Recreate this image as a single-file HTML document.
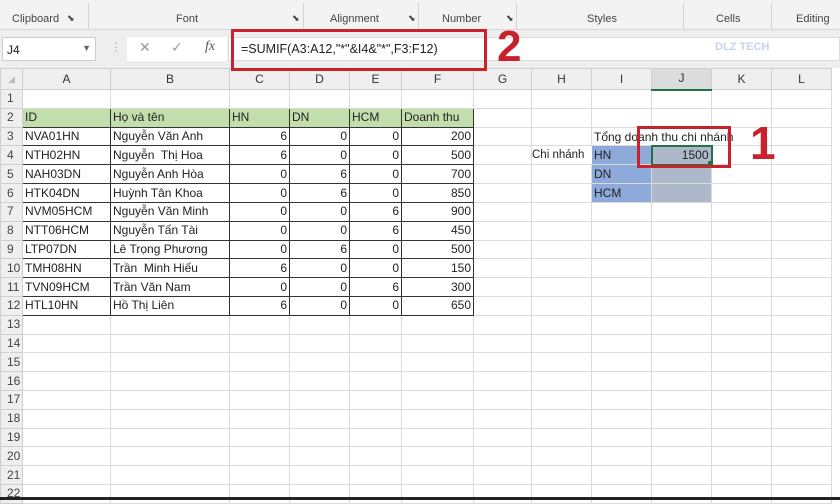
<!DOCTYPE html><html><head><meta charset="utf-8"><style>
*{margin:0;padding:0;box-sizing:border-box}
body{width:840px;height:500px;overflow:hidden;background:#fff;font-family:"Liberation Sans","DejaVu Sans",sans-serif;position:relative}
.rib{position:absolute;left:0;top:0;width:840px;height:30px;background:#f3f3f3;border-bottom:1px solid #d8d8d8}
.rib span{position:absolute;top:13px;font-size:11px;color:#444}
.rib i{position:absolute;top:3px;width:1px;height:26px;background:#d4d4d4}
.fb{position:absolute;left:0;top:30px;width:840px;height:38px;background:#eeeeee}
.nb{position:absolute;left:2px;top:37px;width:94px;height:24px;background:#fff;border:1px solid #ccc;font-size:12px;padding:5px 4px;color:#222}
.fx{position:absolute;left:127px;top:37px;width:100px;height:24px;background:#fff;font-size:14px;color:#999}
.fin{position:absolute;left:228px;top:37px;width:612px;height:24px;background:#fff;border:1px solid #ddd}
.ftxt{position:absolute;left:241px;top:42px;font-size:12.5px;color:#222}
.red{position:absolute;border:3px solid #c8232c}
.num{position:absolute;color:#c8232c;font-weight:bold;font-family:"Liberation Sans",sans-serif}
table{position:absolute;left:0;top:68px;border-collapse:collapse;table-layout:fixed;width:831px}
td{height:18.8px;border:1px solid #dadada;font-size:12px;color:#222;padding:0 2px;white-space:nowrap;overflow:hidden;line-height:17px}
tr.h td{height:21px;background:#efefef;text-align:center;color:#333;border-color:#cfcfcf}
td.r{background:#efefef;color:#444;font-size:12px;text-align:left;padding-left:6px;border-color:#cfcfcf}
td.n{text-align:right}
td.b{border:1px solid #333}
td.g{background:#c2dead}
td.bl{background:#8eaadb}
td.gy{background:#adb9ca}
.t{position:absolute;font-size:12px;color:#222;white-space:nowrap}
</style></head><body>
<div class="rib">
<span style="left:12px">Clipboard</span><span style="left:67px;font-size:9px">⬊</span>
<i style="left:88px"></i><span style="left:176px">Font</span><span style="left:292px;font-size:9px">⬊</span>
<i style="left:303px"></i><span style="left:330px">Alignment</span><span style="left:408px;font-size:9px">⬊</span>
<i style="left:418px"></i><span style="left:442px">Number</span><span style="left:506px;font-size:9px">⬊</span>
<i style="left:516px"></i><span style="left:587px">Styles</span>
<i style="left:683px"></i><span style="left:716px">Cells</span>
<i style="left:771px"></i><span style="left:796px">Editing</span>
</div>
<div class="fb"></div>
<div class="nb">J4<span style="float:right;color:#666;font-size:9px">▼</span></div>
<div style="position:absolute;left:110px;top:40px;color:#aaa;font-size:12px">⋮</div>
<div class="fx"><span style="position:absolute;left:12px;top:2px">✕</span><span style="position:absolute;left:44px;top:2px">✓</span><span style="position:absolute;left:78px;top:2px;font-style:italic;font-family:'Liberation Serif',serif;color:#555">fx</span></div>
<div class="fin"></div>
<div class="ftxt">=SUMIF(A3:A12,"*"&amp;I4&amp;"*",F3:F12)</div>
<div style="position:absolute;left:675px;top:30px;width:100px;height:32px;color:#c6d4ea;font-size:11px;font-weight:bold;padding:11px 0 0 40px">DLZ TECH</div>
<table>
<colgroup><col style="width:22px"><col style="width:88px"><col style="width:119px"><col style="width:60px"><col style="width:60px"><col style="width:52px"><col style="width:72px"><col style="width:58px"><col style="width:60px"><col style="width:60px"><col style="width:60px"><col style="width:60px"><col style="width:60px"></colgroup>
<tr class="h"><td style="font-size:9px;color:#bbb">◢</td><td>A</td><td>B</td><td>C</td><td>D</td><td>E</td><td>F</td><td>G</td><td>H</td><td>I</td><td style="background:#dcdcdc;border-bottom:2px solid #217346">J</td><td>K</td><td>L</td></tr>
<tr><td class="r">1</td><td></td><td></td><td></td><td></td><td></td><td></td><td></td><td></td><td></td><td></td><td></td><td></td></tr>
<tr><td class="r">2</td><td class="b g">ID</td><td class="b g">Họ và tên</td><td class="b g">HN</td><td class="b g">DN</td><td class="b g">HCM</td><td class="b g">Doanh thu</td><td></td><td></td><td></td><td></td><td></td><td></td></tr>
<tr><td class="r">3</td><td class="b">NVA01HN</td><td class="b">Nguyễn Văn Anh</td><td class="b n">6</td><td class="b n">0</td><td class="b n">0</td><td class="b n">200</td><td></td><td></td><td style="border-right-color:transparent"></td><td style="border-right-color:transparent"></td><td></td><td></td></tr>
<tr><td class="r">4</td><td class="b">NTH02HN</td><td class="b">Nguyễn&nbsp; Thị Hoa</td><td class="b n">6</td><td class="b n">0</td><td class="b n">0</td><td class="b n">500</td><td></td><td style="border-right-color:transparent"></td><td class="bl">HN</td><td class="gy n" style="border:2px solid #217346">1500</td><td></td><td></td></tr>
<tr><td class="r">5</td><td class="b">NAH03DN</td><td class="b">Nguyễn Anh Hòa</td><td class="b n">0</td><td class="b n">6</td><td class="b n">0</td><td class="b n">700</td><td></td><td></td><td class="bl">DN</td><td class="gy"></td><td></td><td></td></tr>
<tr><td class="r">6</td><td class="b">HTK04DN</td><td class="b">Huỳnh Tân Khoa</td><td class="b n">0</td><td class="b n">6</td><td class="b n">0</td><td class="b n">850</td><td></td><td></td><td class="bl">HCM</td><td class="gy"></td><td></td><td></td></tr>
<tr><td class="r">7</td><td class="b">NVM05HCM</td><td class="b">Nguyễn Văn Minh</td><td class="b n">0</td><td class="b n">0</td><td class="b n">6</td><td class="b n">900</td><td></td><td></td><td></td><td></td><td></td><td></td></tr>
<tr><td class="r">8</td><td class="b">NTT06HCM</td><td class="b">Nguyễn Tấn Tài</td><td class="b n">0</td><td class="b n">0</td><td class="b n">6</td><td class="b n">450</td><td></td><td></td><td></td><td></td><td></td><td></td></tr>
<tr><td class="r">9</td><td class="b">LTP07DN</td><td class="b">Lê Trọng Phương</td><td class="b n">0</td><td class="b n">6</td><td class="b n">0</td><td class="b n">500</td><td></td><td></td><td></td><td></td><td></td><td></td></tr>
<tr><td class="r">10</td><td class="b">TMH08HN</td><td class="b">Trần&nbsp; Minh Hiếu</td><td class="b n">6</td><td class="b n">0</td><td class="b n">0</td><td class="b n">150</td><td></td><td></td><td></td><td></td><td></td><td></td></tr>
<tr><td class="r">11</td><td class="b">TVN09HCM</td><td class="b">Trần Văn Nam</td><td class="b n">0</td><td class="b n">0</td><td class="b n">6</td><td class="b n">300</td><td></td><td></td><td></td><td></td><td></td><td></td></tr>
<tr><td class="r">12</td><td class="b">HTL10HN</td><td class="b">Hồ Thị Liên</td><td class="b n">6</td><td class="b n">0</td><td class="b n">0</td><td class="b n">650</td><td></td><td></td><td></td><td></td><td></td><td></td></tr>
<tr><td class="r">13</td><td></td><td></td><td></td><td></td><td></td><td></td><td></td><td></td><td></td><td></td><td></td><td></td></tr>
<tr><td class="r">14</td><td></td><td></td><td></td><td></td><td></td><td></td><td></td><td></td><td></td><td></td><td></td><td></td></tr>
<tr><td class="r">15</td><td></td><td></td><td></td><td></td><td></td><td></td><td></td><td></td><td></td><td></td><td></td><td></td></tr>
<tr><td class="r">16</td><td></td><td></td><td></td><td></td><td></td><td></td><td></td><td></td><td></td><td></td><td></td><td></td></tr>
<tr><td class="r">17</td><td></td><td></td><td></td><td></td><td></td><td></td><td></td><td></td><td></td><td></td><td></td><td></td></tr>
<tr><td class="r">18</td><td></td><td></td><td></td><td></td><td></td><td></td><td></td><td></td><td></td><td></td><td></td><td></td></tr>
<tr><td class="r">19</td><td></td><td></td><td></td><td></td><td></td><td></td><td></td><td></td><td></td><td></td><td></td><td></td></tr>
<tr><td class="r">20</td><td></td><td></td><td></td><td></td><td></td><td></td><td></td><td></td><td></td><td></td><td></td><td></td></tr>
<tr><td class="r">21</td><td></td><td></td><td></td><td></td><td></td><td></td><td></td><td></td><td></td><td></td><td></td><td></td></tr>
<tr><td class="r">22</td><td></td><td></td><td></td><td></td><td></td><td></td><td></td><td></td><td></td><td></td><td></td><td></td></tr>
</table>
<div class="t" style="left:594px;top:130px">Tổng doanh thu chi nhánh</div>
<div class="t" style="left:532px;top:149px;font-size:11.5px">Chi nhánh</div>
<div style="position:absolute;left:0;top:497px;width:840px;height:3px;background:#222"></div>
<div style="position:absolute;left:708px;top:161px;width:5px;height:5px;background:#217346"></div>
<div class="red" style="left:231px;top:29px;width:256px;height:42px"></div>
<div class="num" style="left:497px;top:22px;font-size:44px">2</div>
<div class="red" style="left:637px;top:126px;width:94px;height:42px"></div>
<div class="num" style="left:750px;top:116px;font-size:46px">1</div>
</body></html>
